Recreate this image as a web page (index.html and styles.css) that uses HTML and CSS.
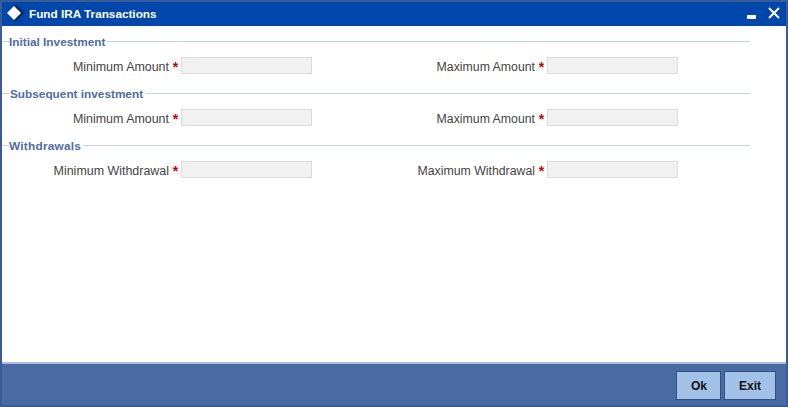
FILE: index.html
```html
<!DOCTYPE html>
<html>
<head>
<meta charset="utf-8">
<title>Fund IRA Transactions</title>
<link rel="stylesheet" href="styles.css">
</head>
<body>
<div class="window">
  <header class="titlebar">
    <svg class="logo" width="18" height="17" viewBox="0 0 18 17"><path d="M9.500 0 L17.500 8 L9.500 16 L7 16 L7 0 Z" fill="#0b2a63"/><path d="M7 1 L14 8 L7 15 L0 8 Z" fill="#fff"/></svg>
    <span class="title">Fund IRA Transactions</span>
    <svg class="winctl min" width="9" height="4" viewBox="0 0 9 4"><rect width="9" height="4" fill="#fff"/></svg>
    <svg class="winctl close" width="12" height="12" viewBox="0 0 12 12"><path d="M1 1 L11 11 M11 1 L1 11" stroke="#fff" stroke-width="2" fill="none"/></svg>
  </header>
  <main class="content">
    <section class="group">
      <div class="legend"><span class="legend-text">Initial Investment</span></div>
      <div class="row">
        <label class="label">Minimum Amount</label><span class="req">*</span><input class="field" disabled>
        <label class="label second">Maximum Amount</label><span class="req">*</span><input class="field" disabled>
      </div>
    </section>
    <section class="group">
      <div class="legend"><span class="legend-text sub">Subsequent investment</span></div>
      <div class="row">
        <label class="label">Minimum Amount</label><span class="req">*</span><input class="field" disabled>
        <label class="label second">Maximum Amount</label><span class="req">*</span><input class="field" disabled>
      </div>
    </section>
    <section class="group">
      <div class="legend"><span class="legend-text wide">Withdrawals</span></div>
      <div class="row">
        <label class="label">Minimum Withdrawal</label><span class="req">*</span><input class="field" disabled>
        <label class="label second">Maximum Withdrawal</label><span class="req">*</span><input class="field" disabled>
      </div>
    </section>
  </main>
  <footer class="footer">
    <button class="btn">Ok</button>
    <button class="btn">Exit</button>
  </footer>
</div>
</body>
</html>
```
FILE: styles.css
```css
* { box-sizing: border-box; }
html, body { margin: 0; padding: 0; }
body { width: 788px; height: 407px; overflow: hidden; font-family: "Liberation Sans", Arial, sans-serif; }
.window { width: 788px; height: 407px; border: 2px solid #3b5b98; display: flex; flex-direction: column; background: #fff; }
.titlebar { height: 24px; background: #0047ab; display: flex; align-items: center; color: #fff; flex: none; }
.logo { margin-left: 5px; margin-bottom: 1px; flex: none; }
.title { margin-left: 4px; margin-bottom: 1px; font-size: 11.75px; font-weight: bold; flex: 1; }
.winctl { flex: none; }
.min { margin-right: 12px; margin-top: 6px; }
.close { margin-right: 6px; margin-top: -3px; }
.content { flex: 1; padding-top: 6px; }
.group { height: 52px; }
.legend { display: flex; align-items: center; height: 19px; width: 748px; }
.legend::before { content: ""; width: 7px; height: 1px; background: #c8d2de; flex: none; }
.legend::after { content: ""; flex: 1; height: 1px; background: #c8d2de; }
.legend-text { font-size: 11.8px; font-weight: bold; color: #4d6da6; padding-right: 2px; }
.legend-text.sub { padding-left: 1px; }
.legend-text.wide { letter-spacing: .25px; }
.row { display: flex; align-items: center; height: 18px; margin-top: 7px; }
.label { width: 167px; margin-right: 1px; text-align: right; font-size: 12.45px; color: #444; flex: none; }
.label.second { width: 223px; font-size: 12.3px; }
.req { width: 11px; text-align: center; color: #c00; font-size: 14px; line-height: 14px; font-weight: bold; flex: none; }
.field { width: 131px; height: 17px; align-self: flex-start; margin: -1px 0 0; background: #f1f1f1; border: 1px solid #dcdcdc; padding: 0; flex: none; }
.footer { height: 43px; flex: none; background: #4a6aa3; border-top: 2px solid #a9bcdc; display: flex; justify-content: flex-end; align-items: flex-start; gap: 3px; padding: 7px 10px 0 0; }
.btn { width: 45px; height: 29px; background: #a3c0e6; border: 1px solid #3b5b98; border-color: #35517f #2f4f85 #2f4f85 #35517f; color: #111; font: bold 12px "Liberation Sans", Arial, sans-serif; padding: 0 0 0 1px; }
.btn + .btn { width: 52px; padding: 0; }
```
